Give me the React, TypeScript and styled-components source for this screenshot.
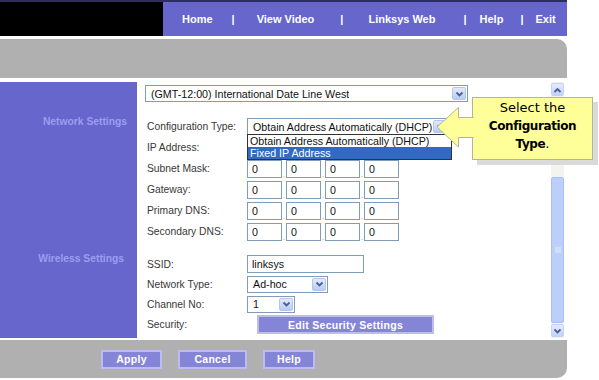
import styled, { createGlobalStyle } from 'styled-components'

const GlobalStyle = createGlobalStyle`
  html, body {
    margin: 0;
    padding: 0;
    background: #fff;
    font-family: "Liberation Sans", Arial, sans-serif;
  }
`

const Page = styled.div`
  position: relative;
  width: 567px;
  height: 380px;
  display: flex;
  flex-direction: column;
`

const TopLine = styled.div`
  height: 2px;
  background: #2e2e5e;
`

const Header = styled.div`
  display: flex;
  height: 34px;
`

const LogoBlock = styled.div`
  width: 163px;
  background: #000;
`

const Nav = styled.nav`
  flex: 1;
  display: flex;
  align-items: center;
  padding-left: 19px;
  background: #6666cc;
  color: #fff;
  font-size: 11px;
  font-weight: bold;
`

const NavLink = styled.span`
  white-space: nowrap;
`

const NavSep = styled.span<{ $l: number; $r: number }>`
  margin: 0 ${p => p.$r}px 0 ${p => p.$l}px;
`

const GrayBar = styled.div<{ $top?: boolean }>`
  background: #b0b0b0;
  border-top-right-radius: ${p => (p.$top ? '10px' : '0')};
  border-bottom-right-radius: ${p => (p.$top ? '0' : '10px')};
`

const TitleBar = styled(GrayBar)`
  height: 39px;
  margin-top: 3px;
`

const Main = styled.div`
  display: flex;
  height: 256px;
  margin-top: 4px;
`

const Sidebar = styled.aside`
  width: 137px;
  background: #6666cc;
  display: flex;
  flex-direction: column;
  align-items: flex-end;
  padding: 34px 10px 0 0;
  box-sizing: border-box;
`

const SideLabel = styled.div<{ $mt?: number; $mr?: number }>`
  margin-top: ${p => p.$mt ?? 0}px;
  margin-right: ${p => p.$mr ?? 0}px;
  color: #9d9df0;
  font-size: 10.3px;
  font-weight: bold;
  line-height: 12px;
`

const Content = styled.section`
  width: 414px;
  padding: 3px 0 0 8px;
  box-sizing: border-box;
  color: #383838;
  font-size: 10.3px;
`

const SelectBox = styled.div<{ $w: number }>`
  position: relative;
  width: ${p => p.$w}px;
  height: 17px;
  box-sizing: border-box;
  border: 1px solid #7f9db9;
  background: #fff;
  display: flex;
  align-items: center;
  justify-content: space-between;
  color: #111;
  font-size: 10.7px;
`

const SelectText = styled.span`
  padding-left: 5px;
  white-space: nowrap;
  overflow: hidden;
`

const ArrowBtn = styled.span`
  width: 14px;
  height: 13px;
  margin-right: 1px;
  box-sizing: border-box;
  border: 1px solid #b3c6f3;
  border-radius: 2px;
  background: linear-gradient(#e2eafd, #b8cbf8);
  display: flex;
  align-items: center;
  justify-content: center;
  flex-shrink: 0;
`

const Form = styled.div`
  margin-top: 14px;
  display: flex;
  flex-direction: column;
`

const Row = styled.div<{ $h: number; $mt?: number }>`
  display: flex;
  align-items: center;
  height: ${p => p.$h}px;
  margin-top: ${p => p.$mt ?? 0}px;
`

const Label = styled.label`
  width: 100px;
  padding-left: 2px;
  flex-shrink: 0;
  white-space: nowrap;
`

const Field = styled.div`
  position: relative;
  display: flex;
  align-items: center;
`

const TextBox = styled.div<{ $w: number }>`
  width: ${p => p.$w}px;
  height: 18px;
  box-sizing: border-box;
  border: 1px solid #7f9db9;
  background: #fff;
  padding-left: 4px;
  display: flex;
  align-items: center;
  color: #111;
  font-size: 10.7px;
`

const Dot = styled.span`
  width: 4px;
  align-self: flex-end;
  text-align: center;
  font-size: 8px;
  line-height: 6px;
  color: #8a8a8a;
`

const DropList = styled.ul`
  position: absolute;
  left: 0;
  top: 16px;
  width: 203px;
  margin: 0;
  padding: 0;
  list-style: none;
  border: 1px solid #333;
  background: #fff;
  font-size: 10.7px;
  z-index: 2;
`

const Option = styled.li<{ $active?: boolean }>`
  height: 12px;
  line-height: 12px;
  padding-left: 2px;
  white-space: nowrap;
  background: ${p => (p.$active ? '#316ac5' : '#fff')};
  color: ${p => (p.$active ? '#fff' : '#111')};
`

const PurpleButton = styled.button<{ $w: number; $ml?: number }>`
  width: ${p => p.$w}px;
  height: 19px;
  margin-left: ${p => p.$ml ?? 0}px;
  padding: 0;
  border: 2px solid #bcbcf2;
  background: #8585d8;
  color: #fff;
  font-family: "Liberation Sans", Arial, sans-serif;
  font-size: 10.5px;
  font-weight: bold;
  letter-spacing: 0.3px;
  cursor: pointer;
`

const ScrollBar = styled.div`
  width: 13px;
  display: flex;
  flex-direction: column;
  padding: 1px 0;
  background: #f3f3ef;
`

const ScrollBtn = styled.div`
  height: 13px;
  box-sizing: border-box;
  border: 1px solid #c3d3f8;
  border-radius: 2px;
  background: linear-gradient(#e4ecfd, #c2d3fa);
  display: flex;
  align-items: center;
  justify-content: center;
`

const Track = styled.div`
  flex: 1;
  padding-top: 81px;
  box-sizing: border-box;
`

const Thumb = styled.div`
  height: 146px;
  box-sizing: border-box;
  border: 1px solid #aac0f4;
  border-radius: 2px;
  background: #bccffb;
  display: flex;
  align-items: center;
  justify-content: center;
`

const Footer = styled(GrayBar)`
  height: 38px;
  margin-top: 2px;
  display: flex;
  align-items: center;
  gap: 16px;
  padding-left: 101px;
`

const Callout = styled.div`
  position: absolute;
  left: 472px;
  top: 97px;
  width: 121px;
  height: 63px;
  box-sizing: border-box;
  border: 1px solid #b4b49c;
  background: #ffff99;
  box-shadow: 5px 5px 0 #dadada;
  padding-top: 1px;
  text-align: center;
  color: #000;
  font-family: "DejaVu Sans", Verdana, sans-serif;
  font-size: 13px;
  line-height: 17.5px;
`

const Strong = styled.b`
  font-size: 12px;
  letter-spacing: -0.4px;
`

const CalloutArrow = styled.svg`
  position: absolute;
  left: 436px;
  top: 106px;
  z-index: 3;
`

const Chevron = ({ up }: { up?: boolean }) => (
  <svg width="9" height="6" viewBox="0 0 9 6">
    <path
      d={up ? 'M1.5 5 L4.5 2 L7.5 5' : 'M1.5 1.5 L4.5 4.5 L7.5 1.5'}
      fill="none"
      stroke="#4d6185"
      strokeWidth="1.8"
    />
  </svg>
)

const Select = ({ w, value }: { w: number; value: string }) => (
  <SelectBox $w={w}>
    <SelectText>{value}</SelectText>
    <ArrowBtn>
      <Chevron />
    </ArrowBtn>
  </SelectBox>
)

const IpField = () => (
  <Field>
    {[0, 1, 2, 3].map(i => (
      <Field key={i}>
        {i > 0 && <Dot>.</Dot>}
        <TextBox $w={35}>0</TextBox>
      </Field>
    ))}
  </Field>
)

// the IP Address boxes sit under the open dropdown, so that row shows only its label
const ipRows = ['Subnet Mask:', 'Gateway:', 'Primary DNS:', 'Secondary DNS:']

export default function App() {
  return (
    <>
      <GlobalStyle />
      <Page>
        <TopLine />
        <Header>
          <LogoBlock />
          <Nav>
            <NavLink>Home</NavLink>
            <NavSep $l={19} $r={22}>|</NavSep>
            <NavLink>View Video</NavLink>
            <NavSep $l={26} $r={25}>|</NavSep>
            <NavLink>Linksys Web</NavLink>
            <NavSep $l={28} $r={13}>|</NavSep>
            <NavLink>Help</NavLink>
            <NavSep $l={17} $r={12}>|</NavSep>
            <NavLink>Exit</NavLink>
          </Nav>
        </Header>
        <TitleBar $top />

        <Main>
          <Sidebar>
            <SideLabel>Network Settings</SideLabel>
            <SideLabel $mt={125} $mr={3}>Wireless Settings</SideLabel>
          </Sidebar>

          <Content>
            <Select w={323} value="(GMT-12:00) International Date Line West" />
            <Form>
              <Row $h={21}>
                <Label>Configuration Type:</Label>
                <Field>
                  <Select w={202} value="Obtain Address Automatically (DHCP)" />
                  <DropList>
                    <Option>Obtain Address Automatically (DHCP)</Option>
                    <Option $active>Fixed IP Address</Option>
                  </DropList>
                </Field>
              </Row>
              <Row $h={21}>
                <Label>IP Address:</Label>
              </Row>
              {ipRows.map(l => (
                <Row $h={21} key={l}>
                  <Label>{l}</Label>
                  <IpField />
                </Row>
              ))}

              <Row $h={20} $mt={12}>
                <Label>SSID:</Label>
                <TextBox $w={117}>linksys</TextBox>
              </Row>
              <Row $h={20}>
                <Label>Network Type:</Label>
                <Select w={81} value="Ad-hoc" />
              </Row>
              <Row $h={20}>
                <Label>Channel No:</Label>
                <Select w={48} value="1" />
              </Row>
              <Row $h={21}>
                <Label>Security:</Label>
                <PurpleButton $w={177} $ml={10}>Edit Security Settings</PurpleButton>
              </Row>
            </Form>
          </Content>

          <ScrollBar>
            <ScrollBtn>
              <Chevron up />
            </ScrollBtn>
            <Track>
              <Thumb>
                <svg width="6" height="7" viewBox="0 0 6 7">
                  <path d="M0 1h6M0 3h6M0 5h6" stroke="#e4ecfd" strokeWidth="1" />
                </svg>
              </Thumb>
            </Track>
            <ScrollBtn>
              <Chevron />
            </ScrollBtn>
          </ScrollBar>
        </Main>

        <Footer>
          <PurpleButton $w={61}>Apply</PurpleButton>
          <PurpleButton $w={69}>Cancel</PurpleButton>
          <PurpleButton $w={52}>Help</PurpleButton>
        </Footer>

        <Callout>
          Select the
          <br />
          <Strong>Configuration</Strong>
          <br />
          <Strong>Type</Strong>.
        </Callout>
        <CalloutArrow width="39" height="43" viewBox="0 0 39 43">
          <polygon points="1,21 22,1 22,11 38,11 38,31 22,31 22,41" fill="#ffff99" />
          <path
            d="M37.5 11.5 H22.5 V1.5 L1 21 L22.5 41 V31.5 H37.5"
            fill="none"
            stroke="#b4b49c"
            strokeWidth="1"
          />
        </CalloutArrow>
      </Page>
    </>
  )
}
